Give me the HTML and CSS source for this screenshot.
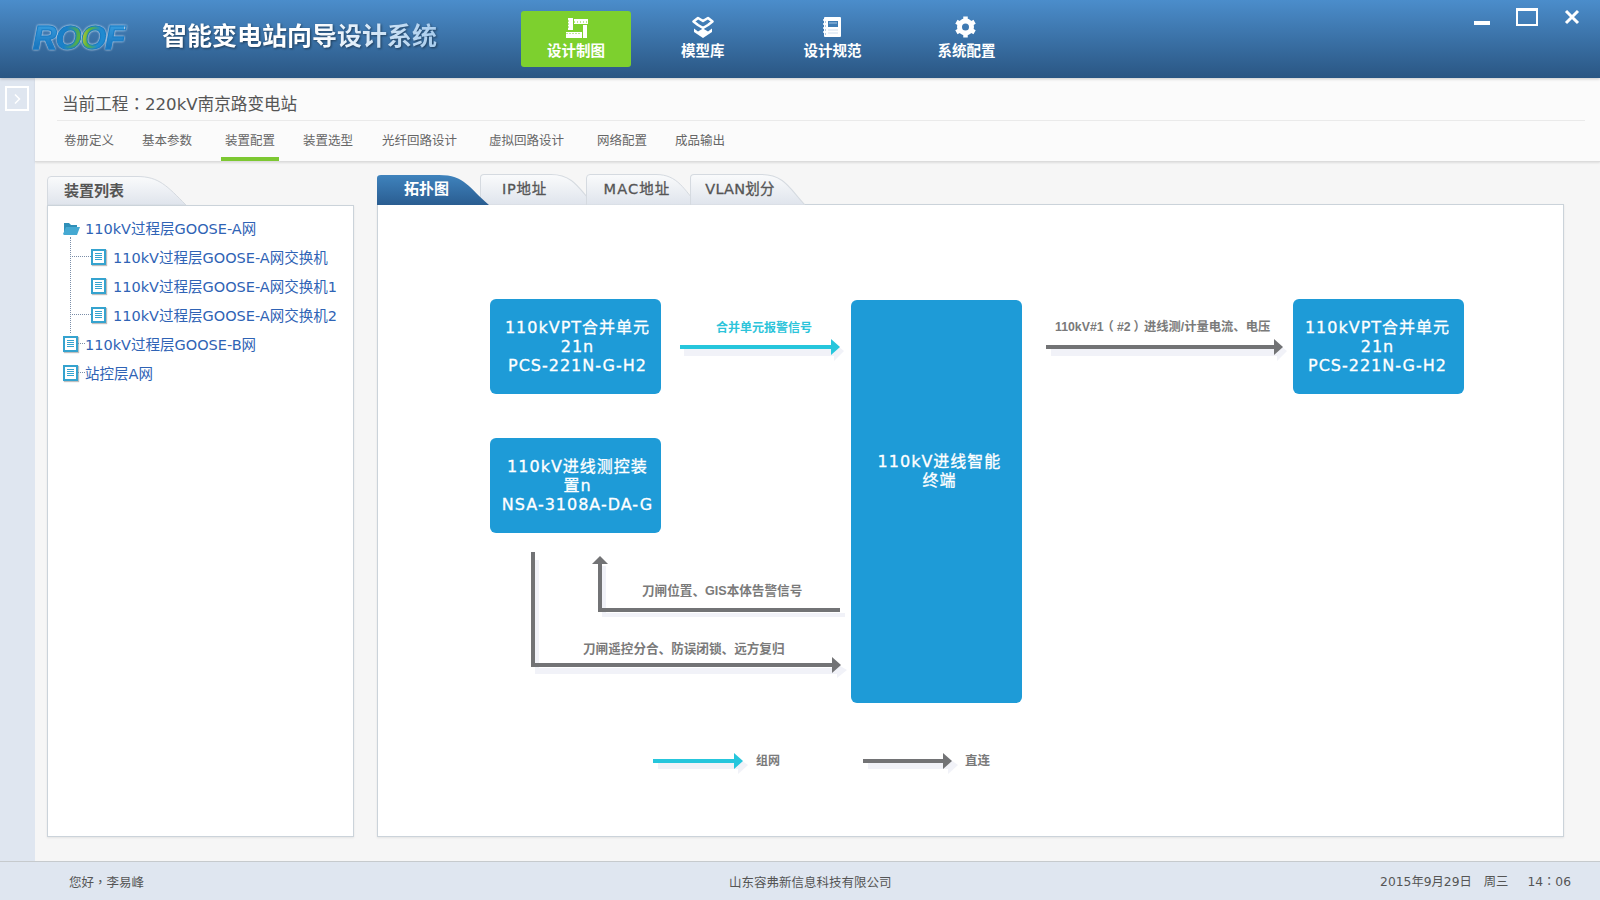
FILE: index.html
```html
<!DOCTYPE html>
<html lang="zh-CN">
<head>
  <meta charset="UTF-8" />
  <title>智能变电站向导设计系统</title>
  <link rel="stylesheet" href="styles.css">
</head>
<body>
  <header class="top-bar">
    <div class="logo"><span class="logo-r">R</span><span class="logo-o1">O</span><span class="logo-o2">O</span><span class="logo-f">F</span></div>
    <div class="app-title">智能变电站向导设计系统</div>
    <nav class="main-nav">
      <a class="nav-item active">
        <svg class="nav-icon" viewBox="0 0 24 24" fill="#fff">
          <path d="M4 3h5v12H4zM10 4h14v5H10zM19 10h4v13h-4zM2 17h16v6H2z"/>
          <path d="M10 7h14M4 6h3M4 9h3M4 12h3M3 18v2M6 18v2M9 18v2M12 18v2M15 18v2" stroke="#7dd02e" stroke-width="1" stroke-dasharray="1 2" fill="none"/>
        </svg>
        设计制图
      </a>
      <a class="nav-item">
        <svg class="nav-icon" viewBox="0 0 24 24">
          <path d="M12 6L7 3 2.500 6.500 7 10l5 3 5-3 4.500-3.500L17 3z" fill="none" stroke="#fff" stroke-width="2.600" stroke-linejoin="round"/>
          <path d="M3 13.500l4 3 5-3 5 3 4-3V17l-9 6-9-6z" fill="#fff"/>
        </svg>
        模型库
      </a>
      <a class="nav-item wide">
        <svg class="nav-icon" viewBox="0 0 24 24">
          <rect x="3" y="2" width="17" height="20" rx="1" fill="#fff"/>
          <rect x="7" y="6" width="10" height="6" fill="#3f7db5"/>
          <path d="M8 8h8" stroke="#a8c8e6"/>
          <path d="M7 15h10M7 18h10" stroke="#cfdeee"/>
          <path d="M2 5h2M2 9h2M2 13h2M2 17h2" stroke="#fff" stroke-width="1.500"/>
          <path d="M4 7h1M4 11h1M4 15h1M4 19h1" stroke="#6c97c0"/>
        </svg>
        设计规范
      </a>
      <a class="nav-item">
        <svg class="nav-icon" viewBox="0 0 24 24">
          <circle cx="10.500" cy="12" r="6" fill="none" stroke="#fff" stroke-width="5"/>
          <path d="M10.500 1.500v4M10.500 18.500v4M1.400 6.750l3.500 2M16.100 15.250l3.500 2M19.600 6.750l-3.500 2M4.900 15.250l-3.500 2" stroke="#fff" stroke-width="4.500"/>
        </svg>
        系统配置
      </a>
    </nav>
    <div class="win-buttons">
      <span class="win-min"></span>
      <span class="win-max"></span>
      <svg class="win-close" viewBox="0 0 16 16"><path d="M2 2l12 12M14 2L2 14" stroke="#fff" stroke-width="3"/></svg>
    </div>
  </header>

  <div class="middle">
    <aside class="side-rail">
      <div class="rail-toggle">
        <svg viewBox="0 0 12 12" width="12" height="12"><path d="M4 1.500L8.500 6 4 10.500" fill="none" stroke="#fff" stroke-width="1.500"/></svg>
      </div>
    </aside>

    <main class="content">
      <section class="project-bar">
        <div class="project-name">当前工程<span class="punct" lang="zh-TW">：</span>220kV南京路变电站</div>
        <div class="step-tabs">
          <a class="step">卷册定义</a>
          <a class="step">基本参数</a>
          <a class="step active">装置配置</a>
          <a class="step">装置选型</a>
          <a class="step">光纤回路设计</a>
          <a class="step">虚拟回路设计</a>
          <a class="step">网络配置</a>
          <a class="step">成品输出</a>
        </div>
      </section>

      <div class="work-area">
        <section class="tree-col">
          <div class="tree-tab">
            <svg class="tab-shape" viewBox="0 0 139 29" preserveAspectRatio="none"><path d="M.5 29V4Q.5 .5 4 .5H90C112 .5 120 10 139 29Z" fill="url(#tabFill)" stroke="#d5dae0"/></svg>
            <span>装置列表</span>
          </div>
          <div class="tree-panel">
            <ul class="tree">
              <li class="tree-row">
                <svg class="folder-icon" viewBox="0 0 17 14">
                  <path d="M1 13V2h5l2 2h6v2H4z" fill="#2f8fb8"/>
                  <path d="M0 13L3 6h14l-3 8H1z" fill="#45a9d2"/>
                </svg>
                110kV过程层GOOSE-A网
              </li>
              <li>
                <ul class="tree-children">
                  <li class="tree-row dotted"><span class="doc-icon"></span>110kV过程层GOOSE-A网交换机</li>
                  <li class="tree-row"><span class="doc-icon"></span>110kV过程层GOOSE-A网交换机1</li>
                  <li class="tree-row dotted"><span class="doc-icon"></span>110kV过程层GOOSE-A网交换机2</li>
                </ul>
              </li>
              <li class="tree-row dotted-short"><span class="doc-icon"></span>110kV过程层GOOSE-B网</li>
              <li class="tree-row dotted-short"><span class="doc-icon"></span>站控层A网</li>
            </ul>
          </div>
        </section>

        <section class="diagram-col">
          <div class="view-tabs">
            <a class="view-tab active">
              <svg class="tab-shape" viewBox="0 0 112 31" preserveAspectRatio="none"><path d="M0 31V4Q0 1 4 1H62C88 1 92 14 112 31Z" fill="url(#tabActive)"/></svg>
              <span>拓扑图</span>
            </a>
            <a class="view-tab ip">
              <svg class="tab-shape" viewBox="0 0 112 31" preserveAspectRatio="none"><path d="M.5 31V4Q.5 .5 4 .5H70C92 .5 98 16 112 31Z" fill="url(#tabFill)" stroke="#d5dae0"/></svg>
              <span>IP地址</span>
            </a>
            <a class="view-tab mac">
              <svg class="tab-shape" viewBox="0 0 112 31" preserveAspectRatio="none"><path d="M.5 31V4Q.5 .5 4 .5H70C92 .5 98 16 112 31Z" fill="url(#tabFill)" stroke="#d5dae0"/></svg>
              <span>MAC地址</span>
            </a>
            <a class="view-tab vlan">
              <svg class="tab-shape" viewBox="0 0 112 31" preserveAspectRatio="none"><path d="M.5 31V4Q.5 .5 4 .5H70C92 .5 98 16 112 31Z" fill="url(#tabFill)" stroke="#d5dae0"/></svg>
              <span>VLAN划分</span>
            </a>
          </div>

          <div class="diagram">
            <svg class="wires" viewBox="378 205 1185 631">
              <defs>
                <linearGradient id="tabFill" x1="0" y1="0" x2="0" y2="1">
                  <stop offset="0" stop-color="#fafbfc"/>
                  <stop offset="1" stop-color="#dfe4ec"/>
                </linearGradient>
                <linearGradient id="tabActive" x1="0" y1="0" x2="0" y2="1">
                  <stop offset="0" stop-color="#3f83bd"/>
                  <stop offset="1" stop-color="#2a5d91"/>
                </linearGradient>
              </defs>
              <!-- shadows -->
              <g fill="#f1f2f8" stroke="none">
                <path d="M684 348h150v-5l10 8-10 10v-5H684z"/>
                <path d="M1051 348h226v-5l10 8-10 10v-5H1051z"/>
                <path d="M602 566h4v47h239v4H602z"/>
                <path d="M535 560h4v108h298v-4l10 6-10 8v-4H535z"/>
                <path d="M658 763h80v-5l10 7-10 9v-5h-80z"/>
                <path d="M868 763h80v-5l10 7-10 9v-5h-80z"/>
              </g>
              <!-- cyan wire -->
              <g fill="#26c6dc">
                <path d="M680 345h151v-6l9 8-9 8v-6H680z"/>
                <path d="M653 759h81v-6l9 8-9 8v-6h-81z"/>
              </g>
              <!-- gray wires -->
              <g fill="#727375">
                <path d="M1046 345h228v-6l9 8-9 8v-6H1046z"/>
                <path d="M598 612v-48h-6l8-8 8 8h-6v44h238v4z"/>
                <path d="M531 552h4v111h297v-6l9 8-9 8v-6H531z"/>
                <path d="M863 759h80v-6l9 8-9 8v-6h-80z"/>
              </g>
            </svg>

            <div class="node node-merge">110kVPT合并单元<br>21n<br>PCS-221N-G-H2</div>
            <div class="node node-measure">110kV进线测控装<br>置n<br>NSA-3108A-DA-G</div>
            <div class="node node-terminal">110kV进线智能<br>终端</div>
            <div class="node node-merge-right">110kVPT合并单元<br>21n<br>PCS-221N-G-H2</div>

            <span class="wire-label cyan label-alarm">合并单元报警信号</span>
            <span class="wire-label label-current">110kV#1<span class="paren-open">（</span>#2<span class="paren-close">）</span>进线测/计量电流、电压</span>
            <span class="wire-label label-gis">刀闸位置、GIS本体告警信号</span>
            <span class="wire-label label-remote">刀闸遥控分合、防误闭锁、远方复归</span>
            <span class="wire-label label-net">组网</span>
            <span class="wire-label label-direct">直连</span>
          </div>
        </section>
      </div>
    </main>
  </div>

  <footer class="status-bar">
    <span class="greeting">您好<span class="punct" lang="zh-TW">，</span>李易峰</span>
    <span class="company">山东容弗新信息科技有限公司</span>
    <span class="clock">2015年9月29日<i>周三</i><i>14<span class="punct" lang="zh-TW">：</span>06</i></span>
  </footer>
</body>
</html>
```

FILE: styles.css
```css
* {
  box-sizing: border-box;
}

html, body {
  height: 100%;
}

body {
  margin: 0;
  height: 900px;
  overflow: hidden;
  display: flex;
  flex-direction: column;
  font-family: "DejaVu Sans", "Noto Sans CJK SC", sans-serif;
  background: #f6f6f6;
  color: #555;
}

ul {
  list-style: none;
  margin: 0;
  padding: 0;
}

/* full width punctuation sits centred in the reference */
.punct {
  font-family: "Noto Sans CJK TC", sans-serif;
  line-height: 1;
}

/* top bar */
.top-bar {
  position: relative;
  height: 78px;
  flex: none;
  display: flex;
  background: linear-gradient(#4b8dcb, #2a5683);
  box-shadow: 0 1px 3px rgba(0,0,0,0.2);
  z-index: 2;
}

.logo {
  width: 162px;
  padding: 18px 0 0 33px;
  font: italic bold 33px/40px "Liberation Sans", sans-serif;
  letter-spacing: -1px;
  white-space: nowrap;
  filter: drop-shadow(0 0 1px #e6f2ff);
}

.logo span {
  color: transparent;
  -webkit-background-clip: text;
  background-clip: text;
  -webkit-text-stroke: 1px #1a7cc4;
}

.logo-r,
.logo-f {
  background-image: linear-gradient(#3ea6e6, #0f67b2);
}

.logo-o1 {
  background-image: linear-gradient(100deg, #1b80c8 40%, #58b33c 85%);
}

.logo-o2 {
  background-image: linear-gradient(100deg, #d8cf3a 5%, #58b33c 35%, #1f8ad0 70%);
}

.app-title {
  width: 359px;
  padding-top: 18px;
  font-size: 25px;
  line-height: 32px;
  font-weight: 700;
  font-family: "Noto Sans CJK SC", sans-serif;
  white-space: nowrap;
  color: transparent;
  background: linear-gradient(90deg, #fff 0, #fff 150px, #a9cdee 275px) 0 0 / 275px 100% no-repeat;
  -webkit-background-clip: text;
  background-clip: text;
  filter: drop-shadow(1px 1px 1px rgba(0,0,0,0.45));
}

.main-nav {
  display: flex;
  gap: 24px;
  height: 56px;
  margin-top: 11px;
}

.nav-item {
  padding: 4px 26px 0;
  display: flex;
  flex-direction: column;
  align-items: center;
  font-size: 14.500px;
  line-height: 20px;
  font-weight: 700;
  font-family: "Noto Sans CJK SC", sans-serif;
  color: #fff;
  white-space: nowrap;
  border-radius: 3px;
}

.nav-item.active {
  background: #7dd02e;
}

.nav-item.wide {
  margin-left: 3px;
}

.nav-icon {
  width: 24px;
  height: 24px;
  margin-bottom: 1px;
}

.win-buttons {
  position: absolute;
  top: 8px;
  right: 0;
  display: flex;
  align-items: center;
}

.win-min {
  width: 16px;
  height: 4px;
  margin: 12px 0 0 0;
  background: #fff;
}

.win-max {
  width: 22px;
  height: 18px;
  margin-left: 26px;
  border: 2px solid #fff;
  border-top-width: 3px;
}

.win-close {
  width: 16px;
  height: 16px;
  margin: 0 20px 0 26px;
}

/* middle */
.middle {
  flex: 1;
  display: flex;
  min-height: 0;
}

.side-rail {
  width: 35px;
  flex: none;
  padding: 8px 0 0 5px;
  background: #dfe6f0;
}

.rail-toggle {
  width: 24px;
  height: 25px;
  border: 2px solid #fff;
  display: flex;
  align-items: center;
  justify-content: center;
}

.content {
  flex: 1;
  display: flex;
  flex-direction: column;
  min-width: 0;
}

.project-bar {
  height: 84px;
  flex: none;
  padding: 0 15px 0 22px;
  background: #fbfbfb;
  border-bottom: 1px solid #dcdcdc;
  box-shadow: 0 1px 2px rgba(0,0,0,0.1);
}

.project-name {
  height: 43px;
  padding: 16px 0 0 5px;
  font-size: 16.600px;
  line-height: 22px;
  color: #555;
  border-bottom: 1px solid #eaeaea;
}

.step-tabs {
  display: flex;
  gap: 20px;
  padding-left: 3px;
}

.step {
  height: 40px;
  padding: 11px 4px 0;
  font-size: 12.500px;
  line-height: 18px;
  color: #666;
  border-bottom: 4px solid transparent;
  white-space: nowrap;
}

.step.active {
  border-bottom-color: #7dc832;
}

.step:nth-child(3) { margin-left: 5px; }
.step:nth-child(5) { margin-left: 1px; }
.step:nth-child(6) { margin-left: 4px; }
.step:nth-child(7) { margin-left: 5px; }

.work-area {
  flex: 1;
  display: flex;
  gap: 23px;
  padding: 0 36px 24px 12px;
  min-height: 0;
}

.tab-shape {
  position: absolute;
  left: 0;
  top: 0;
  width: 100%;
  height: 100%;
}

/* tree */
.tree-col {
  width: 307px;
  flex: none;
  margin-top: 14px;
  display: flex;
  flex-direction: column;
}

.tree-tab {
  position: relative;
  width: 139px;
  height: 29px;
  flex: none;
  padding: 5px 0 0 17px;
  font-size: 15px;
  line-height: 18px;
  font-weight: 700;
  font-family: "Noto Sans CJK SC", sans-serif;
  color: #555;
}

.tree-tab span {
  position: relative;
}

.tree-panel {
  flex: 1;
  padding: 7px 0 0 15px;
  background: #fff;
  border: 1px solid #cbd3da;
  box-shadow: 0 1px 2px rgba(0,0,0,0.08);
}

.tree-row {
  position: relative;
  height: 29px;
  display: flex;
  align-items: center;
  font-size: 14.500px;
  color: #2f63b5;
  white-space: nowrap;
}

.tree-children {
  position: relative;
}

.tree-children::before {
  content: "";
  position: absolute;
  left: 7px;
  top: -5px;
  height: 96px;
  border-left: 1px dotted #7b8ea8;
}

.tree-children .tree-row {
  padding-left: 28px;
}

.dotted::before,
.dotted-short::before {
  content: "";
  position: absolute;
  top: 14px;
  left: 7px;
  width: 21px;
  border-top: 1px dotted #7b8ea8;
}

.dotted-short::before {
  left: 15px;
  width: 7px;
}

.folder-icon {
  width: 17px;
  height: 14px;
  margin-right: 5px;
}

.doc-icon {
  flex: none;
  width: 15px;
  height: 16px;
  margin-right: 7px;
  border: 2px solid #35a3cf;
  background: repeating-linear-gradient(#35a3cf 0 1px, #fff 1px 2px) 2px 2px / 7px 8px no-repeat #fff;
  box-shadow: 1px 1px 1px rgba(0,0,0,0.25);
}

/* diagram */
.diagram-col {
  flex: 1;
  min-width: 0;
  margin-top: 12px;
  display: flex;
  flex-direction: column;
}

.view-tabs {
  display: flex;
  height: 31px;
  flex: none;
  position: relative;
  z-index: 1;
  margin-bottom: -1px;
}

.view-tab {
  position: relative;
  width: 112px;
  margin-left: -8px;
  padding-top: 5px;
  text-align: center;
  font-size: 14.500px;
  line-height: 20px;
  letter-spacing: 0.8px;
  -webkit-text-stroke: 0.3px #555;
  color: #555;
  white-space: nowrap;
}

.view-tab span {
  position: relative;
  margin-left: -13px;
}

.view-tab.active {
  margin-left: 0;
  padding-top: 4px;
  color: #fff;
  z-index: 1;
  font-size: 15px;
  font-weight: 700;
  letter-spacing: 0;
  -webkit-text-stroke: 0;
  font-family: "Noto Sans CJK SC", sans-serif;
}

.view-tab.ip {
  width: 114px;
  margin-left: -9px;
}

.view-tab.ip span { margin-left: -25px; }
.view-tab.mac span { margin-left: -10px; }
.view-tab.vlan span { margin-left: -15px; }

.view-tab.mac { letter-spacing: 1.100px; }

.view-tab.vlan {
  width: 115px;
  letter-spacing: 0.200px;
}

.diagram {
  position: relative;
  flex: 1;
  background: #fff;
  border: 1px solid #cbd3da;
  box-shadow: 0 1px 2px rgba(0,0,0,0.08);
}

.wires {
  position: absolute;
  left: 0;
  top: 0;
  width: 1185px;
  height: 631px;
}

.node {
  position: absolute;
  width: 171px;
  height: 95px;
  padding: 19px 0 0 4px;
  text-align: center;
  font-size: 16px;
  line-height: 19px;
  letter-spacing: 1px;
  -webkit-text-stroke: 0.3px #fff;
  color: #fff;
  background: #1e9bd7;
  border-radius: 6px;
}

.node-merge { left: 112px; top: 94px; }
.node-measure { left: 112px; top: 233px; }

.node-merge-right {
  left: 915px;
  top: 94px;
  padding: 19px 2px 0 0;
}

.node-terminal {
  left: 473px;
  top: 95px;
  height: 403px;
  padding: 152px 0 0 6px;
}

.wire-label {
  position: absolute;
  font: 700 12px/16px "Liberation Sans", "Noto Sans CJK SC", sans-serif;
  color: #7a7a7a;
  white-space: nowrap;
}

.wire-label.cyan { color: #2cc4da; }

.paren-open { margin: 0 3px 0 -2px; }
.paren-close { margin: 0 -2px 0 3px; }

.label-gis,
.label-remote {
  font-size: 12.600px;
}

.label-current {
  font-size: 12.300px;
}

.label-direct {
  font-size: 12.500px;
}

.label-alarm { left: 338px; top: 115px; }
.label-current { left: 677px; top: 114px; }
.label-gis { left: 264px; top: 378px; }
.label-remote { left: 205px; top: 436px; }
.label-net { left: 378px; top: 548px; }
.label-direct { left: 587px; top: 548px; }

/* footer */
.status-bar {
  height: 39px;
  flex: none;
  display: flex;
  align-items: center;
  padding: 0 29px 0 69px;
  background: #dfe6f0;
  border-top: 1px solid #c6cacd;
  font-size: 12.500px;
  color: #555;
  white-space: nowrap;
}

.greeting {
  width: 660px;
}

.clock {
  margin-left: auto;
  font-size: 12.300px;
}

.clock i {
  font-style: normal;
  margin-left: 12px;
}

.clock i:last-child {
  margin-left: 19px;
}
```
